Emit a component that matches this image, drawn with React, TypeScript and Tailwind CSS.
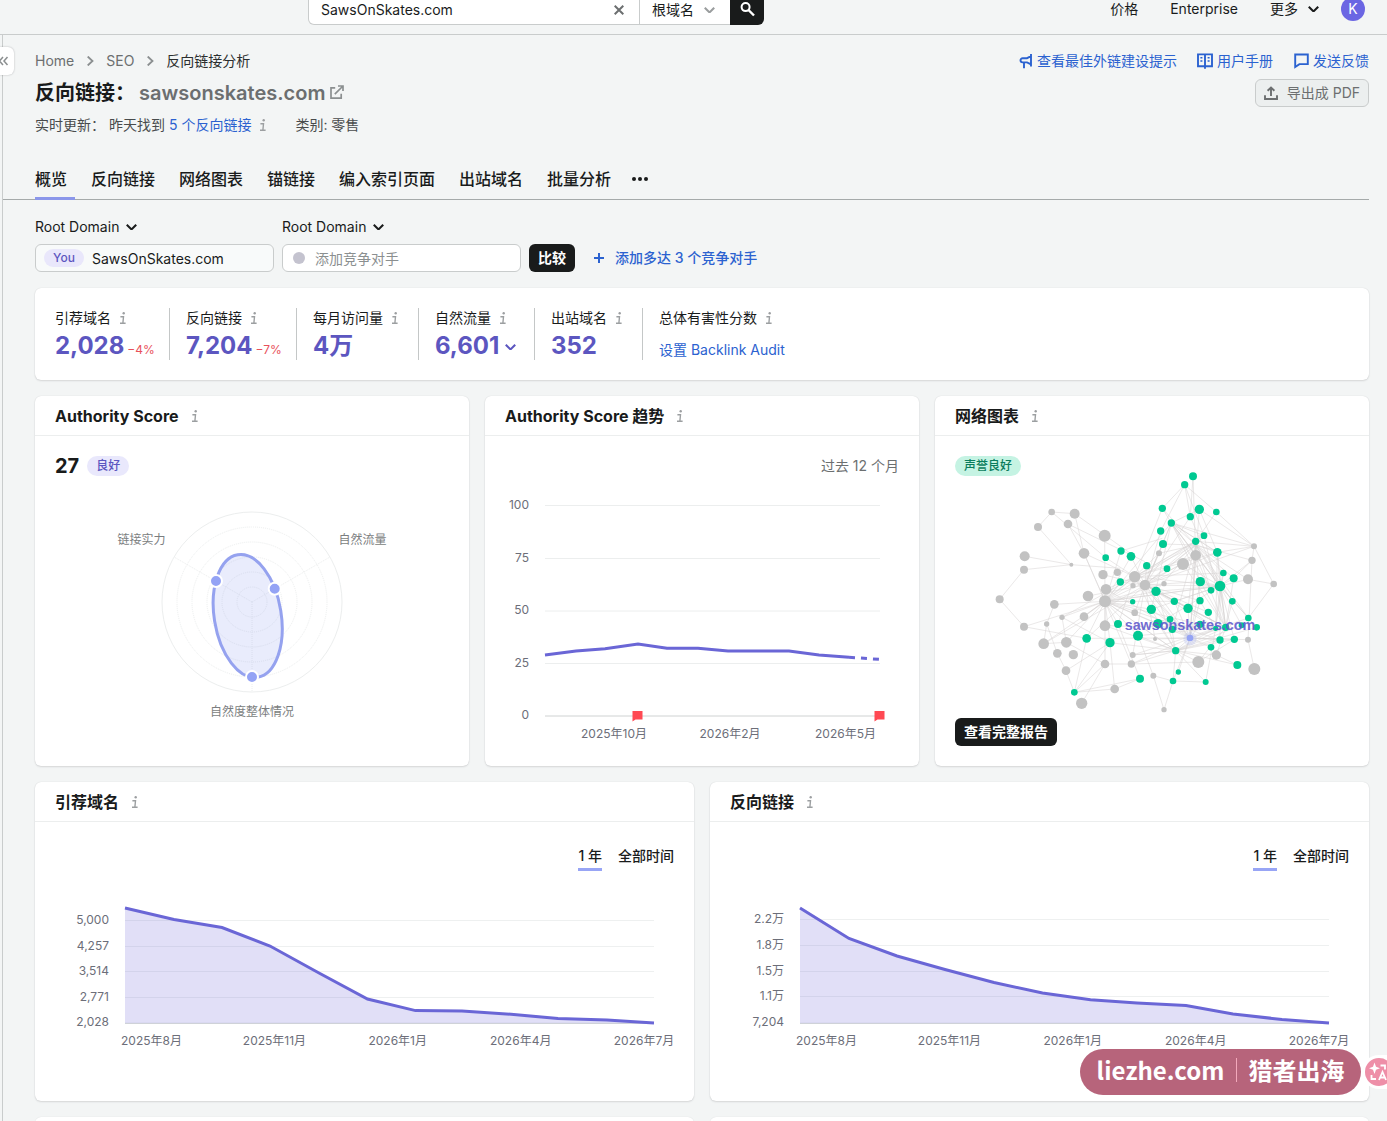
import type { ReactNode } from 'react'
import { clsx } from 'clsx'

const TABS = ['概览', '反向链接', '网络图表', '锚链接', '编入索引页面', '出站域名', '批量分析']

/* ---------- icons ---------- */

function InfoIcon({ className }: { className?: string }) {
  return (
    <svg className={clsx('shrink-0', className)} width="8" height="14" viewBox="0 0 8 14" fill="none" stroke="#9c9fa1" strokeWidth="1.4">
      <circle cx="4.7" cy="2.2" r="1.2" fill="#9c9fa1" stroke="none" />
      <path d="M1.4 5.8h3.1L3.9 12M1 12.2h5.6" />
    </svg>
  )
}

function Chevron({ className, size = 11 }: { className?: string; size?: number }) {
  return (
    <svg className={clsx('shrink-0', className)} width={size} height={(size * 6) / 10} viewBox="0 0 10 6" fill="none" stroke="currentColor" strokeWidth="1.9">
      <path d="M0.7 0.7 5 4.9 9.3 0.7" />
    </svg>
  )
}

function CrumbArrow() {
  return (
    <svg width="8" height="10" viewBox="0 0 8 10" fill="none" stroke="#8b8f90" strokeWidth="1.8">
      <path d="M1.7 0.5 6.5 5 1.7 9.5" />
    </svg>
  )
}

function MegaphoneIcon() {
  return (
    <svg width="14" height="16" viewBox="0 0 14 16" fill="none" stroke="currentColor" strokeWidth="1.9">
      <path d="M12 1v12.4M12 3.2 8 5.2H3.6a2.1 2.1 0 0 0 0 4.200H8l4 2M5 9.500v5.800" />
    </svg>
  )
}

function BookIcon() {
  return (
    <svg className="mr-px" width="16" height="16" viewBox="0 0 16 16" fill="none" stroke="currentColor" strokeWidth="1.9">
      <path d="M1 1.4h14v11.8H1zM8 1.4v14.4" />
      <path d="M3.4 4.8h2M3.4 8h2M10.6 4.8h2M10.6 8h2" strokeWidth="1.4" />
    </svg>
  )
}

function ChatIcon() {
  return (
    <svg width="15" height="16" viewBox="0 0 15 16" fill="none" stroke="currentColor" strokeWidth="1.9">
      <path d="M1.2 1.5h12.6v9.6H5.4L1.2 14z" />
    </svg>
  )
}

function UploadIcon() {
  return (
    <svg width="14" height="14" viewBox="0 0 14 14" fill="none" stroke="currentColor" strokeWidth="1.9">
      <path d="M7 10V1.6M3.6 4.8 7 1.5l3.4 3.3M1 9.2V13h12V9.2" />
    </svg>
  )
}

function ExternalIcon() {
  return (
    <svg width="14" height="14" viewBox="0 0 14 14" fill="none" stroke="#8b8f90" strokeWidth="1.7">
      <path d="M5.2 2.8H1v10.3h10.2V8.8M8 1h5v5M13 1 4.8 9.2" />
    </svg>
  )
}

/* ---------- building blocks ---------- */

function Card({ title, className, children }: { title: string; className?: string; children: ReactNode }) {
  return (
    <section className={clsx('flex flex-col rounded-md bg-white shadow-[0_0_1px_rgba(25,27,35,0.16),0_1px_2px_rgba(25,27,35,0.12)]', className)}>
      <header className="flex h-10 shrink-0 items-center border-b border-[#eceeee] px-5">
        <h2 className="text-base font-bold text-[#191b1b]">{title}</h2>
        <InfoIcon className="ml-3" />
      </header>
      {children}
    </section>
  )
}

function Stat({ label, value, className, children }: { label: string; value?: string; className?: string; children?: ReactNode }) {
  return (
    <div className={clsx('mr-4 h-[52px] border-[#c4c7c7]', className)}>
      <div className="flex h-5 items-center text-sm whitespace-nowrap">
        {label}
        <InfoIcon className="ml-2" />
      </div>
      <div className="flex h-9 items-center whitespace-nowrap">
        {value && <span className="text-2xl font-bold text-[#5c56c0]">{value}</span>}
        {children}
      </div>
    </div>
  )
}

/* ---------- authority score radar ---------- */

const RINGS = [15, 30, 45, 60, 75]
const RADAR_POINTS = [
  [181, 186],
  [239.7, 193.8],
  [217, 282],
]

function Radar() {
  return (
    <svg className="block" width="434" height="290" viewBox="0 81 434 290">
      <g fill="none" stroke="#eceeee">
        <circle cx="217" cy="207" r="90" />
        {RINGS.map((r) => (
          <circle key={r} cx="217" cy="207" r={r} strokeDasharray="1 1" />
        ))}
        <path d="M217 207 139 162M217 207l78-45M217 207v90" strokeDasharray="1 1" />
      </g>
      <ellipse cx="212.7" cy="221" rx="62.1" ry="33.5" transform="rotate(80.8 212.7 221)" fill="#8f9ef0" fillOpacity="0.2" stroke="#95a2ef" strokeWidth="3" />
      {RADAR_POINTS.map(([x, y]) => (
        <circle key={x} cx={x} cy={y} r="6" fill="#94a3f5" stroke="#fff" strokeWidth="2" />
      ))}
      <g fontSize="12" fill="#7b7e80" textAnchor="middle">
        <text x="106.5" y="149">链接实力</text>
        <text x="327.5" y="149">自然流量</text>
        <text x="217" y="321">自然度整体情况</text>
      </g>
    </svg>
  )
}

/* ---------- authority score trend ---------- */

const TREND_GRID = [
  { label: '100', y: 110.5 },
  { label: '75', y: 163.5 },
  { label: '50', y: 216 },
  { label: '25', y: 268.5 },
  { label: '0', y: 321 },
]

function Trend() {
  return (
    <svg className="block" width="434" height="290" viewBox="0 81 434 290">
      {TREND_GRID.map(({ label, y }) => (
        <g key={label}>
          <path d={`M60 ${y}H395`} stroke={label === '0' ? '#cfd2d2' : '#eceeee'} />
          <text x="44" y={y + 3} fontSize="12" fill="#6c6e79" textAnchor="end">{label}</text>
        </g>
      ))}
      <path d="M60 260 91 256l29-2.2 33-4.8 29 4.3h31l30 2.7h61l30 4 30 2.3" fill="none" stroke="#6a66d6" strokeWidth="3" />
      <path d="M364 262.3 395 264.4" fill="none" stroke="#6a66d6" strokeWidth="3" strokeDasharray="6 6" />
      <path d="M147.5 316h10v8.5h-7l-3 2zM389.5 316h10v8.5h-7l-3 2z" fill="#ff4953" />
      <g fontSize="12" fill="#6c6e79" textAnchor="middle">
        <text x="129" y="343">2025年10月</text>
        <text x="245" y="343">2026年2月</text>
        <text x="360.5" y="343">2026年5月</text>
      </g>
    </svg>
  )
}

/* ---------- network graph ---------- */

type Node = [x: number, y: number, r: number]

const GRAY: Node[] = [
  [350, 351, 10], [419, 356, 15], [309, 396, 12], [399, 387, 13], [509, 422, 18],
  [269, 484, 15], [267, 524, 12], [447, 475, 16], [409, 509, 6], [194, 613, 12],
  [267, 695, 12], [335, 687, 8], [381, 667, 8], [358, 628, 13], [459, 603, 16],
  [447, 665, 13], [326, 746, 16], [394, 742, 16], [367, 775, 13], [415, 779, 14],
  [393, 827, 13], [440, 925, 17], [539, 882, 13], [510, 807, 13], [593, 780, 9],
  [589, 807, 11], [655, 842, 9], [687, 944, 8], [510, 692, 16], [510, 619, 18],
  [513, 583, 16], [504, 539, 14], [547, 532, 11], [599, 545, 17], [630, 570, 16],
  [672, 475, 9], [744, 507, 18], [782, 481, 16], [687, 566, 8], [599, 653, 10],
  [660, 732, 6], [790, 801, 18], [844, 780, 14], [958, 822, 18], [939, 734, 9],
  [939, 553, 15], [951, 496, 11], [957, 454, 9], [1016, 567, 10], [594, 572, 8],
]

const GREEN: Node[] = [
  [774, 244, 12], [749, 269, 11], [682, 340, 11], [793, 343, 14], [844, 351, 10],
  [766, 365, 11], [709, 384, 11], [677, 408, 11], [807, 422, 10], [782, 439, 11],
  [684, 447, 12], [847, 472, 13], [558, 468, 11], [588, 484, 13], [512, 488, 10],
  [635, 512, 11], [696, 521, 10], [556, 561, 11], [663, 589, 14], [796, 560, 14],
  [865, 534, 10], [896, 550, 12], [855, 573, 16], [828, 586, 10], [593, 620, 8],
  [718, 619, 11], [795, 617, 11], [892, 619, 10], [649, 643, 14], [759, 640, 14],
  [820, 652, 11], [940, 669, 10], [705, 673, 10], [669, 686, 14], [712, 703, 11],
  [795, 688, 11], [842, 700, 8], [872, 697, 11], [920, 691, 9], [965, 697, 10],
  [549, 687, 12], [609, 722, 15], [455, 730, 13], [525, 743, 14], [722, 767, 11],
  [855, 735, 11], [898, 733, 11], [828, 757, 10], [907, 810, 12], [812, 861, 9],
  [730, 831, 8], [714, 858, 10], [615, 851, 12], [418, 892, 10],
]

const OUTER_EDGES =
  'M350 351 419 356 599 484M350 351 309 396 409 509 269 484M409 509 267 524 194 613 267 695 510 619M350 351 512 488 599 545M399 387 447 475 510 619M399 387 630 500M419 356 447 475 599 545M409 509 556 520M381 667 525 743M335 687 326 746 394 742M335 687 358 628 510 619M381 667 394 742 510 807M267 695 455 730M326 746 510 619M367 775 393 827 418 892 455 730M367 775 335 687M393 827 525 743 418 892M418 892 510 807 440 925M418 892 539 882 525 743M539 882 615 851 549 687M418 892 615 851M510 807 589 807 790 801M593 780 722 767M655 842 609 722M655 842 687 944 714 858 812 861M655 842 714 858M774 244 766 365 749 269 682 340M749 269 844 351 957 454 1016 567 939 553M774 244 782 481M749 269 677 408M749 269 807 422M844 351 782 439M957 454 951 496 939 734 958 822M1016 567 940 669M957 454 782 439M957 454 847 472 793 343M951 496 896 550M957 454 709 384M812 861 722 767 907 810M844 780 907 810M682 340 709 384 847 472M793 343 957 454M558 468 682 430M790 801 898 733'

// the busiest nodes, each linked to a run of the others
const HUBS: { from: [number, number]; gray: number[]; green: number[] }[] = [
  { from: [510, 619], gray: [4, 7, 12, 15, 17, 23, 25, 28, 33, 36, 38], green: [9, 12, 13, 17, 18, 22, 24, 25, 28, 33, 40, 41, 42, 43, 44, 45] },
  { from: [630, 570], gray: [14, 16, 24, 31, 35, 37, 39, 40, 47], green: [5, 6, 7, 9, 10, 11, 13, 15, 17, 19, 25, 26, 29, 30, 32, 37, 42] },
  { from: [599, 545], gray: [12, 15, 30, 35, 37], green: [2, 8, 9, 11, 18, 20, 22, 28, 34, 40] },
  { from: [782, 450], gray: [33, 34, 35, 45, 46], green: [2, 6, 8, 10, 11, 16, 18, 20, 21, 22, 23, 26, 27, 29, 31, 34] },
  { from: [855, 573], gray: [29, 34, 36, 37, 45, 46], green: [5, 6, 11, 18, 19, 20, 21, 23, 25, 28, 31, 33, 37, 38, 39, 45, 46] },
  { from: [765, 729], gray: [25, 29, 30, 33, 34, 37, 40, 44], green: [3, 9, 18, 19, 25, 26, 28, 29, 31, 32, 35, 37, 42, 44, 45, 46, 47, 50, 51] },
  { from: [722, 767], gray: [24, 25, 28, 29, 41, 42], green: [18, 28, 32, 33, 38, 39, 41, 43, 45, 46, 51] },
  { from: [842, 700], gray: [24, 28, 29, 34], green: [11, 20, 22, 26, 29, 33, 41, 44, 49] },
  { from: [709, 384], gray: [29, 34, 37], green: [3, 8, 11, 19, 22, 23, 28] },
  { from: [872, 697], gray: [34, 36, 37, 41, 42], green: [8, 11, 18, 19, 21, 22, 25, 27, 44] },
]

function NetworkGraph() {
  return (
    <svg className="block overflow-visible" width="434" height="242" viewBox="0 243 1302 726">
      <g fill="none" stroke="#d6d2d2" strokeWidth="3" strokeOpacity="0.5">
        <path d={OUTER_EDGES} />
        {HUBS.map(({ from, gray, green }) => (
          <path
            key={from.join()}
            d={[...gray.map((i) => GRAY[i]), ...green.map((i) => GREEN[i])].map(([x, y]) => `M${from[0]} ${from[1]} ${x} ${y}`).join('')}
          />
        ))}
      </g>
      {GRAY.map(([x, y, r]) => (
        <circle key={`${x}-${y}`} cx={x} cy={y} r={r} fill="#c2c2c2" />
      ))}
      {GREEN.map(([x, y, r]) => (
        <circle key={`${x}-${y}`} cx={x} cy={y} r={r} fill="#00c992" />
      ))}
      <circle cx="765" cy="731" r="20" fill="#8f9ef0" fillOpacity="0.2" />
      <circle cx="765" cy="729" r="10" fill="#94a3f5" />
      <text x="765" y="705" textAnchor="middle" fontSize="43" fontWeight="700" fill="#5f59cc" fillOpacity="0.9" className="font-['Liberation_Sans',sans-serif]">
        sawsonskates.com
      </text>
    </svg>
  )
}

/* ---------- yearly area charts ---------- */

type Tick = [label: string, y: number]

const MONTHS: [string, number][] = [
  ['2025年8月', 116.5],
  ['2025年11月', 239.5],
  ['2026年1月', 362.7],
  ['2026年4月', 485.7],
  ['2026年7月', 609],
]

const DOMAIN_TICKS: Tick[] = [['5,000', 138.5], ['4,257', 164.5], ['3,514', 189.5], ['2,771', 215.5], ['2,028', 241]]
const LINK_TICKS: Tick[] = [['2.2万', 137.5], ['1.8万', 163.5], ['1.5万', 189.5], ['1.1万', 214.5], ['7,204', 241]]

const POINT_X = [90, 139, 187, 235, 284, 332.5, 380.5, 427, 476, 523, 572, 619]
const DOMAIN_LINE = [126, 137.5, 145.5, 164, 191, 217, 228.6, 229, 232.3, 236.5, 238, 241]
const LINK_LINE = [126, 156.5, 174, 187.5, 200.5, 211, 217.7, 221, 223.5, 232, 237.5, 241]

function AreaChart({ title, ticks, values }: { title: string; ticks: Tick[]; values: number[] }) {
  const line = values.map((y, i) => `${POINT_X[i]} ${y}`).join('L')
  return (
    <Card title={title} className="h-[319px] flex-1">
      <div className="mt-6 flex h-[25px] justify-end gap-4 px-5 text-sm leading-5 font-medium">
        <span className="border-b-[3px] border-[#98a5f5]">1 年</span>
        <span>全部时间</span>
      </div>
      <svg className="block" width="659" height="230" viewBox="0 89 659 230">
        {ticks.map(([label, y]) => (
          <g key={label}>
            <path d={`M90 ${y}H619`} stroke="#eef0f0" />
            <text x="74" y={y + 3.2} fontSize="12" fill="#6c6e79" textAnchor="end">{label}</text>
          </g>
        ))}
        <path d="M90 241.5H619" stroke="#cfd2d8" />
        <path d={`M${line}V241H90Z`} fill="#6a60d6" fillOpacity="0.2" />
        <path d={`M${line}`} fill="none" stroke="#6a66d6" strokeWidth="3" />
        <g fontSize="12" fill="#6c6e79" textAnchor="middle">
          {MONTHS.map(([label, x]) => (
            <text key={label} x={x} y="263">{label}</text>
          ))}
        </g>
      </svg>
    </Card>
  )
}

/* ---------- page sections ---------- */

function TopBar() {
  return (
    <header className="flex h-[35px] items-start border-b border-[#c9cccc] pr-[22px] pl-[308px] text-sm">
      <div className="flex h-[25px] w-[332px] items-center justify-between rounded-bl-md border-r border-b border-l border-[#c9cccc] bg-white pr-[15px] pb-1 pl-3">
        SawsOnSkates.com
        <svg className="-mt-px" width="10" height="10" viewBox="0 0 10 10" stroke="#6c6f70" strokeWidth="2">
          <path d="M0.7 0.7l8.6 8.6M9.3 0.7l-8.6 8.6" />
        </svg>
      </div>
      <div className="flex h-[25px] w-[90px] items-center gap-[10px] border-b border-[#c9cccc] bg-white pb-1 pl-3">
        根域名
        <Chevron className="text-[#9a9d9e]" />
      </div>
      <div className="flex h-[25px] w-[34px] justify-center rounded-br-md bg-[#191b1b] pt-[2px]">
        <svg width="15" height="15" viewBox="0 0 15 15" fill="none" stroke="#fff" strokeWidth="2">
          <circle cx="5.6" cy="5.1" r="4" />
          <path d="M8.5 8 14 13.5" strokeWidth="2.4" />
        </svg>
      </div>
      <nav className="ml-auto flex h-[18px] items-center">
        <a className="mr-8">价格</a>
        <a className="mr-8">Enterprise</a>
        <a className="mr-[10px]">更多</a>
        <Chevron />
        <span className="-mt-[3px] ml-[22px] flex h-6 w-6 items-center justify-center self-start rounded-full bg-[#6b66e3] text-white">K</span>
      </nav>
    </header>
  )
}

function PageHead() {
  return (
    <>
      <div className="flex h-5 items-center justify-between text-sm">
        <nav className="flex items-center gap-3 text-[#6c6f70]">
          <span>Home</span>
          <CrumbArrow />
          <span>SEO</span>
          <CrumbArrow />
          <span className="text-[#2b2e2e]">反向链接分析</span>
        </nav>
        <div className="flex items-center gap-5 text-[#2b62d0]">
          <a className="flex items-center gap-1"><MegaphoneIcon />查看最佳外链建设提示</a>
          <a className="mr-px flex items-center gap-[3px]"><BookIcon />用户手册</a>
          <a className="flex items-center gap-1"><ChatIcon />发送反馈</a>
        </div>
      </div>
      <div className="mt-2 flex h-7 items-center">
        <h1 className="flex items-center text-xl font-semibold text-[#191b1b]">
          反向链接：
          <span className="ml-1 text-[#6c6f70]">sawsonskates.com</span>
        </h1>
        <span className="-mt-[2px] ml-[5px]"><ExternalIcon /></span>
        <button className="ml-auto flex h-7 items-center gap-[9px] rounded-md border border-[#c9cccc] bg-[#ecefef] px-2 text-sm text-[#6c6f70]">
          <UploadIcon />
          导出成 PDF
        </button>
      </div>
      <div className="mt-2 flex h-5 items-center text-sm text-[#484b4c]">
        实时更新：
        <span className="ml-1">昨天找到&nbsp;</span>
        <a className="text-[#2b62d0]">5 个反向链接</a>
        <InfoIcon className="ml-2" />
        <span className="ml-7">类别: 零售</span>
      </div>
      <nav className="mt-[23px] -ml-8 flex h-[42px] gap-4 border-b border-[#a5aaaa] pl-8 font-medium">
        {TABS.map((tab, i) => (
          <a key={tab} className={clsx('-mb-px flex items-center pr-2', i === 0 && 'shadow-[inset_0_-3px_0_#8b97ea]')}>
            {tab}
          </a>
        ))}
        <span className="-ml-[3px] flex items-center gap-[2px]">
          <i className="h-1 w-1 rounded-full bg-[#191b1b]" />
          <i className="h-1 w-1 rounded-full bg-[#191b1b]" />
          <i className="h-1 w-1 rounded-full bg-[#191b1b]" />
        </span>
      </nav>
    </>
  )
}

function CompareBar() {
  return (
    <div className="mt-[17px] flex items-end gap-2 text-sm">
      <div className="w-[239px]">
        <div className="flex h-5 items-center gap-[7px]">Root Domain<Chevron /></div>
        <div className="mt-[7px] flex h-7 items-center rounded-md border border-[#c9cccc] bg-[#f8fafa] pl-2">
          <span className="mr-2 flex h-[18px] w-10 items-center justify-center rounded-full bg-[#e9e7fb] text-xs font-medium text-[#5c56c0]">You</span>
          <span className="pt-[2px]">SawsOnSkates.com</span>
        </div>
      </div>
      <div className="w-[239px]">
        <div className="flex h-5 items-center gap-[7px]">Root Domain<Chevron /></div>
        <div className="mt-[7px] flex h-7 items-center gap-[10px] rounded-md border border-[#c9cccc] bg-white pl-[10px] text-[#8b8f90]">
          <i className="h-3 w-3 rounded-full bg-[#c4c3cf]" />
          <span className="pt-px">添加竞争对手</span>
        </div>
      </div>
      <button className="h-7 w-[46px] rounded-md bg-[#191b1b] font-semibold text-white">比较</button>
      <a className="ml-[11px] flex h-7 items-center gap-[11px] font-medium text-[#2b62d0]">
        <svg width="10" height="10" viewBox="0 0 10 10" stroke="currentColor" strokeWidth="2">
          <path d="M5 0v10M0 5h10" />
        </svg>
        添加多达 3 个竞争对手
      </a>
    </div>
  )
}

function StatsCard() {
  return (
    <section className="mt-4 flex h-[92px] rounded-md bg-white p-5 shadow-[0_0_1px_rgba(25,27,35,0.16),0_1px_2px_rgba(25,27,35,0.12)]">
      <Stat label="引荐域名" value="2,028" className="w-[115px] border-r">
        <span className="mt-2 ml-[3px] text-xs text-[#e8505b]">−4%</span>
      </Stat>
      <Stat label="反向链接" value="7,204" className="w-[111px] border-r">
        <span className="mt-2 ml-[3px] text-xs text-[#e8505b]">−7%</span>
      </Stat>
      <Stat label="每月访问量" value="4万" className="w-[106px] border-r" />
      <Stat label="自然流量" value="6,601" className="w-[100px] border-r">
        <Chevron className="mt-[2px] ml-[6px] text-[#5c56c0]" />
      </Stat>
      <Stat label="出站域名" value="352" className="w-[92px] border-r" />
      <Stat label="总体有害性分数">
        <a className="mt-2 text-sm text-[#2b62d0]">设置 Backlink Audit</a>
      </Stat>
    </section>
  )
}

export default function App() {
  return (
    <div className="relative h-[1121px] w-[1387px] overflow-hidden bg-[#f3f5f5] font-[Inter,'Noto_Sans_CJK_SC',sans-serif] text-[#191b1b]">
      <TopBar />
      <main className="ml-[2px] h-[1086px] border-l border-[#c9cccc] pt-4 pr-[18px] pl-8">
        <PageHead />
        <CompareBar />
        <StatsCard />
        <div className="mt-4 flex gap-4">
          <Card title="Authority Score" className="h-[370px] flex-1">
            <div className="mt-5 flex h-5 items-center gap-2 px-5">
              <span className="text-xl font-bold">27</span>
              <span className="flex h-5 items-center rounded-full bg-[#e9e8fc] px-[9px] text-xs font-medium text-[#5c56c0]">良好</span>
            </div>
            <Radar />
          </Card>
          <Card title="Authority Score 趋势" className="h-[370px] flex-1">
            <div className="mt-5 flex h-5 items-center justify-end px-5 text-sm text-[#6c6f70]">过去 12 个月</div>
            <Trend />
          </Card>
          <Card title="网络图表" className="h-[370px] flex-1">
            <div className="mt-5 flex h-5 px-5">
              <span className="flex items-center rounded-full bg-[#c5f3e3] px-[9px] text-xs font-medium text-[#0a7c5c]">声誉良好</span>
            </div>
            <NetworkGraph />
            <button className="relative ml-5 h-7 w-[102px] rounded-md bg-[#191b1b] text-sm font-semibold text-white">查看完整报告</button>
          </Card>
        </div>
        <div className="mt-4 flex gap-4">
          <AreaChart title="引荐域名" ticks={DOMAIN_TICKS} values={DOMAIN_LINE} />
          <AreaChart title="反向链接" ticks={LINK_TICKS} values={LINK_LINE} />
        </div>
        <div className="mt-4 flex gap-4">
          <div className="h-10 flex-1 rounded-md bg-white shadow-[0_0_1px_rgba(25,27,35,0.16)]" />
          <div className="h-10 flex-1 rounded-md bg-white shadow-[0_0_1px_rgba(25,27,35,0.16)]" />
        </div>
      </main>

      {/* sidebar toggle */}
      <button className="absolute top-[47px] left-0 flex h-7 w-[14px] items-center rounded-r-md bg-white shadow-[0_0_2px_rgba(25,27,35,0.3)]">
        <svg width="9" height="10" viewBox="0 0 9 10" fill="none" stroke="#8b8f90" strokeWidth="1.5">
          <path d="M3 1-.5 5 3 9M7.5 1 4 5l3.5 4" />
        </svg>
      </button>

      {/* site badge */}
      <div className="absolute top-[1049px] left-[1080px] flex h-[46px] w-[281px] items-center justify-center rounded-full bg-[#b7647b] pb-1 font-['Noto_Sans_CJK_SC',sans-serif] text-2xl font-bold text-white">
        liezhe.com
        <i className="mr-[11px] ml-3 h-6 w-px bg-[#f3a9bb]" />
        猎者出海
      </div>

      {/* translate button */}
      <div className="absolute top-[1055px] left-[1362px] flex h-[34px] w-[40px] items-center rounded-l-full bg-white pl-[3px]">
        <div className="h-7 w-7 rounded-full bg-[#ee8fa8]">
          <svg width="28" height="28" viewBox="0 0 28 28" fill="none" stroke="#fff" strokeWidth="1.8">
            <path d="M9.5 4.5 11 8.7l4 1.6-4 1.4-1.500 4.300L8 11.700l-4-1.400 4-1.600z" fill="#fff" stroke="none" />
            <path d="M15.500 7.500h4.500v4M6.500 17v4h4.500M14 22l3.500-8 3.500 8M15 19.500h5" />
          </svg>
        </div>
      </div>
    </div>
  )
}
